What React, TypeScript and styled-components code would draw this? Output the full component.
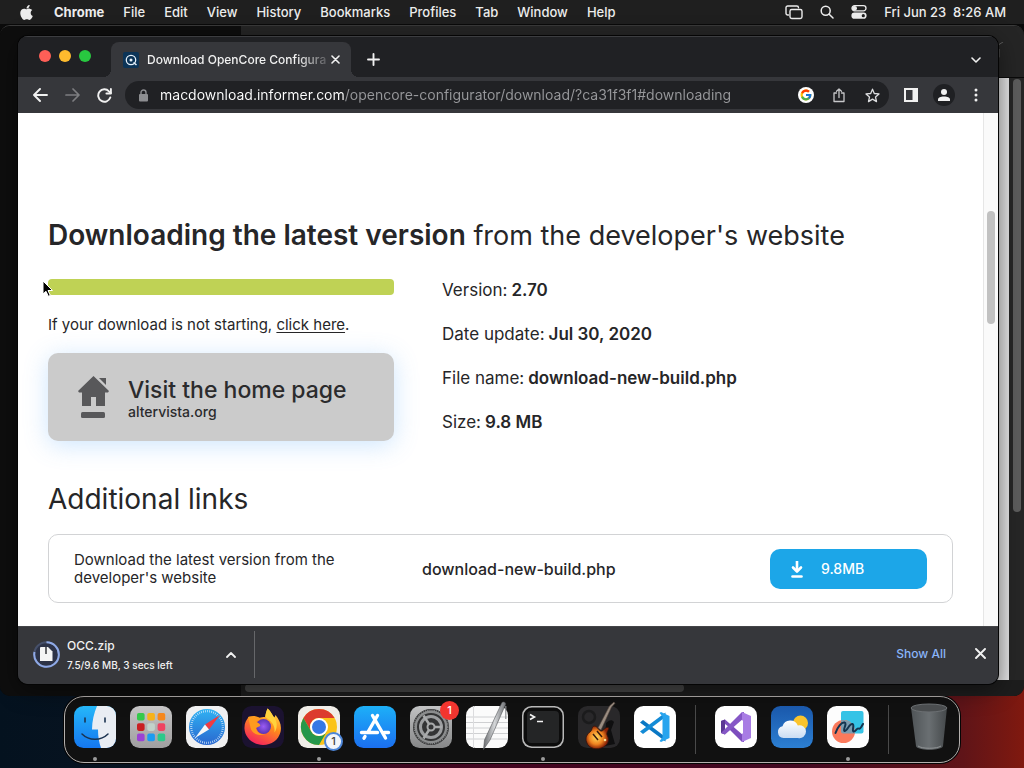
import React from 'react';
import styled, { createGlobalStyle } from 'styled-components';
import { FaApple } from 'react-icons/fa';
import { FcGoogle } from 'react-icons/fc';

const GlobalStyle = createGlobalStyle`
  *, *::before, *::after { box-sizing: border-box; }
  body {
    margin: 0;
    font-family: Inter, "Liberation Sans", sans-serif;
    -webkit-font-smoothing: antialiased;
  }
  button { font: inherit; color: inherit; background: none; border: 0; padding: 0; }
  h1, h2, p, ul, dl, dd { margin: 0; padding: 0; }
  svg { display: block; }
`;

const Desktop = styled.div`
  display: flex;
  flex-direction: column;
  min-height: 100vh;
  overflow: hidden;
  background:
    linear-gradient(180deg, #0a0a0a 60px, transparent 200px),
    linear-gradient(90deg, #04121f 0%, #0b1422 22%, #3a0a20 32%, #43041f 50%, #430820 78%, #5f1418 94%, #80190f 100%);
`;

/* ---------- menu bar ---------- */

const MenuBar = styled.header`
  display: flex;
  align-items: center;
  justify-content: space-between;
  height: 24px;
  padding: 0 18px;
  background: #1f1f1f;
  color: #ececec;
  font-size: 13px;
  font-weight: 500;
  white-space: nowrap;
`;

const MenuGroup = styled.nav<{ $gap: number }>`
  display: flex;
  align-items: center;
  gap: ${(p) => p.$gap}px;
`;

const MenuItem = styled.button<{ $strong?: boolean }>`
  font-weight: ${(p) => (p.$strong ? 700 : 500)};
`;

/* ---------- windows ---------- */

const Stage = styled.main`
  position: relative;
  flex: 1;
  display: flex;
  padding: 12px 26px 12px 18px;
`;

const BackWindow = styled.div`
  position: absolute;
  inset: 1px 0 0 0;
  display: grid;
  grid-template-columns: 241px 1fr;
  grid-template-rows: 52px 1fr 16px;
  overflow: hidden;
  background: #0e0e0e;
  border-radius: 10px;
  border-top: 1px solid #3a3a3a;
`;

const BackSidebar = styled.div`
  grid-row: 1 / 4;
  background: #0e0e0e;
`;

const BackTitle = styled.div`
  display: flex;
  justify-content: flex-end;
  padding: 16px 19px;
  background: #252525;
  border-bottom: 1px solid #0a0a0a;
  color: #5d5d5d;
`;

const BackBody = styled.div`
  display: flex;
  justify-content: flex-end;
  background: #262626;
`;

const BackPaper = styled.div`
  width: 40px;
  background: linear-gradient(90deg, #d0d0d0 70%, #e2e2e4 100%);
`;

const BackScroll = styled.div`
  width: 15px;
  padding: 1px 3px 0 4px;
`;

const BackThumb = styled.div`
  height: 72%;
  border-radius: 4px;
  background: #5c5c5c;
`;

const BackFooter = styled.div`
  padding: 4px 8px 4px 4px;
  background: #1d1d1d;
`;

const BackFooterThumb = styled.div`
  width: 57%;
  height: 8px;
  border-radius: 4px;
  background: #444;
`;

const Browser = styled.section`
  position: relative;
  flex: 1;
  min-width: 0;
  display: flex;
  flex-direction: column;
  border-radius: 10px;
  overflow: hidden;
  background: #36373b;
  box-shadow: 0 0 0 1px #050505, 0 6px 24px rgba(0, 0, 0, 0.45);
`;

const TabStrip = styled.div`
  display: flex;
  align-items: flex-end;
  height: 41px;
  padding: 0 14px 0 21px;
  background: #202124;
  border-top: 1px solid #3c3d40;
  color: #f1f1f1;
`;

const Lights = styled.div`
  display: flex;
  align-items: center;
  gap: 8px;
  width: 72px;
  height: 41px;
  padding-bottom: 2px;
`;

const Light = styled.button<{ $color: string }>`
  width: 12px;
  height: 12px;
  border-radius: 50%;
  background: ${(p) => p.$color};
`;

const Tab = styled.div`
  position: relative;
  display: flex;
  align-items: center;
  width: 240px;
  height: 35px;
  padding: 0 11px 0 12px;
  border-radius: 8px 8px 0 0;
  background: #36373b;
  &::before, &::after {
    content: '';
    position: absolute;
    bottom: 0;
    width: 8px;
    height: 8px;
  }
  &::before { left: -8px; background: radial-gradient(circle at 0 0, transparent 8px, #36373b 8px); }
  &::after { right: -8px; background: radial-gradient(circle at 100% 0, transparent 8px, #36373b 8px); }
`;

const TabTitle = styled.span`
  flex: 1;
  margin-left: 8px;
  white-space: nowrap;
  font-size: 12px;
  font-weight: 500;
  line-height: 18px;
  mask-image: linear-gradient(90deg, #000 82%, transparent 102%);
`;

const IconButton = styled.button<{ $size?: number; $dim?: boolean; $disc?: boolean }>`
  flex: none;
  display: grid;
  place-items: center;
  width: ${(p) => p.$size ?? 22}px;
  height: ${(p) => p.$size ?? 22}px;
  border-radius: 50%;
  background: ${(p) => (p.$disc ? '#1f2023' : 'none')};
  color: ${(p) => (p.$dim ? '#7d7e81' : '#f1f1f1')};
`;

const NewTab = styled.div`
  flex: 1;
  display: flex;
  align-items: center;
  justify-content: space-between;
  height: 35px;
  padding-left: 11px;
`;

const Toolbar = styled.div`
  display: flex;
  align-items: center;
  gap: 10px;
  height: 36px;
  padding: 0 11px 0 11px;
  background: #36373b;
`;

const Omnibox = styled.label`
  flex: 1;
  display: flex;
  align-items: center;
  gap: 11px;
  height: 28px;
  padding: 0 6px 0 13px;
  border-radius: 14px;
  background: #202124;
`;

const Url = styled.input`
  flex: 1;
  min-width: 0;
  height: 24px;
  padding: 0;
  border: 0;
  outline: 0;
  color: #f4f4f4;
  font: 400 14px/24px Inter, "Liberation Sans", sans-serif;
  background: linear-gradient(90deg, #fff 184px, #97989b 184px);
  background-clip: text;
  -webkit-background-clip: text;
  -webkit-text-fill-color: transparent;
`;

/* ---------- page ---------- */

const Viewport = styled.div`
  flex: 1;
  display: flex;
  background: #fff;
`;

const Page = styled.article`
  flex: 1;
  min-width: 0;
  padding: 103px 30px 23px;
  color: #262628;
`;

const ScrollTrack = styled.div`
  width: 15px;
  padding: 98px 3px 0;
  background: #fafafa;
  border-left: 1px solid #e6e6e6;
`;

const ScrollThumb = styled.div`
  width: 8px;
  height: 113px;
  border-radius: 4px;
  background: #c1c1c1;
`;

const Heading = styled.h1`
  font-size: 27px;
  font-weight: 400;
  line-height: 40px;
  white-space: nowrap;
  strong { font-size: 28px; font-weight: 600; line-height: 1; }
`;

const Columns = styled.div`
  display: grid;
  grid-template-columns: 346px 1fr;
  gap: 48px;
  margin-top: 23px;
`;

const Progress = styled.div`
  position: relative;
  height: 16px;
  border-radius: 4px;
  background: #bfd255;
`;

const Pointer = styled.svg`
  position: absolute;
  left: -6px;
  top: 1px;
`;

const Note = styled.p`
  margin: 19px 0 17px;
  font-size: 15px;
  line-height: 22px;
  white-space: nowrap;
  a { color: inherit; text-underline-offset: 2px; }
`;

const HomeButton = styled.a`
  display: flex;
  align-items: center;
  gap: 19px;
  height: 88px;
  padding: 0 30px;
  border-radius: 10px;
  background: #cbcbcb;
  color: #2b2b2d;
  text-decoration: none;
  box-shadow: 0 4px 24px rgba(90, 170, 250, 0.3);
`;

const HomeText = styled.span`
  padding-top: 3px;
`;

const HomeTitle = styled.strong`
  display: block;
  font-size: 23px;
  font-weight: 500;
  line-height: 26px;
  white-space: nowrap;
`;

const HomeHost = styled.span`
  display: block;
  font-size: 14px;
  font-weight: 500;
  line-height: 18px;
`;

const Facts = styled.dl`
  display: flex;
  flex-direction: column;
  gap: 22px;
`;

const Fact = styled.div`
  display: flex;
  gap: 4px;
  font-size: 17px;
  line-height: 22px;
  dd { font-weight: 600; }
`;

const SubHeading = styled.h2`
  margin: 38px 0 15px;
  font-size: 28px;
  font-weight: 400;
  line-height: 40px;
`;

const LinkCard = styled.div`
  display: grid;
  grid-template-columns: 1fr 1fr 157px;
  align-items: center;
  height: 69px;
  padding: 0 25px;
  border: 1px solid #d2d3d5;
  border-radius: 10px;
  p { max-width: 290px; font-size: 15px; line-height: 18px; }
  strong { font-size: 16px; font-weight: 500; }
`;

const DownloadButton = styled.button`
  display: flex;
  align-items: center;
  gap: 17px;
  height: 40px;
  padding: 0 20px;
  border-radius: 10px;
  background: #1ca6e8;
  color: #fff;
  font-size: 14px;
  font-weight: 500;
`;

/* ---------- download shelf ---------- */

const Shelf = styled.footer`
  display: flex;
  align-items: center;
  height: 58px;
  padding: 0 7px 2px 15px;
  background: #36373b;
  border-top: 1px solid #444548;
  color: #f1f1f1;
`;

const ShelfItem = styled.div`
  display: flex;
  align-items: center;
  gap: 7px;
  width: 222px;
  height: 47px;
  padding-right: 12px;
  border-right: 1px solid #66676a;
`;

const ShelfText = styled.div`
  flex: 1;
  white-space: nowrap;
  font-weight: 500;
`;

const FileName = styled.div`
  font-size: 12px;
  line-height: 20px;
`;

const FileState = styled.div`
  font-size: 10px;
  line-height: 18px;
`;

const ShelfActions = styled.div`
  display: flex;
  align-items: center;
  gap: 23px;
  margin-left: auto;
  padding-bottom: 2px;
`;

const ShowAll = styled.button`
  color: #8ab4f8;
  font-size: 12px;
  font-weight: 500;
`;

/* ---------- dock ---------- */

const DockArea = styled.footer`
  display: flex;
  justify-content: center;
  padding-bottom: 5px;
`;

const DockBar = styled.ul`
  display: flex;
  height: 67px;
  padding: 0 2px;
  border: 1px solid #b4b0ae;
  border-radius: 20px;
  background: #111;
  box-shadow: 0 0 0 1px #050505;
  list-style: none;
`;

const DockItem = styled.li<{ $running?: boolean }>`
  display: flex;
  flex-direction: column;
  align-items: center;
  gap: 9px;
  width: 56px;
  padding-top: 9px;
  &::after {
    content: '';
    width: 4px;
    height: 4px;
    border-radius: 50%;
    background: ${(p) => (p.$running ? '#9b9b9b' : 'transparent')};
  }
`;

const DockButton = styled.button`
  position: relative;
  width: 42px;
  height: 42px;
  svg { overflow: visible; }
`;

const DockRule = styled.li`
  width: 25px;
  padding: 8px 12px;
  &::after {
    content: '';
    display: block;
    width: 1px;
    height: 49px;
    background: #4a4a4a;
  }
`;

const Badge = styled.span<{ $kind: 'alert' | 'progress' }>`
  position: absolute;
  display: grid;
  place-items: center;
  width: 19px;
  height: 19px;
  border-radius: 50%;
  font-size: 11px;
  font-weight: 500;
  line-height: 1;
  ${(p) =>
    p.$kind === 'alert'
      ? 'right: -7px; top: -5px; background: #f2352f; color: #fff;'
      : 'right: -3px; bottom: -3px; background: #f4f6fa; color: #444; border: 2px solid #4d86d8;'}
`;

/* ---------- drawings ---------- */

const line = { fill: 'none', stroke: 'currentColor', strokeLinecap: 'round', strokeLinejoin: 'round' } as const;

const Tile = ({ fill }: { fill: string }) => <rect width="42" height="42" rx="9.5" fill={fill} />;

const App42 = ({ children }: { children: React.ReactNode }) => (
  <svg width="42" height="42" viewBox="0 0 42 42" aria-hidden="true">{children}</svg>
);

const Finder = () => (
  <App42>
    <defs>
      <linearGradient id="fi" x2="0" y2="1"><stop stopColor="#25b7f9" /><stop offset="1" stopColor="#1577f0" /></linearGradient>
      <clipPath id="fc"><rect width="42" height="42" rx="9.5" /></clipPath>
    </defs>
    <Tile fill="url(#fi)" />
    <path clipPath="url(#fc)" d="M23 0c-3 7-5 15-5 23.500h6c0 7 1 13 3 18.500h16V0z" fill="#e9edf3" />
    <path d="M11 12v4M31 12v4" stroke="#1b3350" strokeWidth="1.600" strokeLinecap="round" />
    <path d="M8 28c7 7 19 7 26 0" fill="none" stroke="#1b3350" strokeWidth="1.500" strokeLinecap="round" />
  </App42>
);

const Launchpad = () => {
  const colors = ['#35c94b', '#f6b21b', '#f5871d', '#c91f22', '#c2d2ca', '#ef4361', '#9b42d4', '#1c9bf1', '#2bc98a'];
  return (
    <App42>
      <defs><linearGradient id="lp" x2="0" y2="1"><stop stopColor="#c6c5c6" /><stop offset="1" stopColor="#9f9e9f" /></linearGradient></defs>
      <Tile fill="url(#lp)" />
      {colors.map((c, i) => (
        <rect key={c} x={7 + (i % 3) * 10.3} y={7 + Math.floor(i / 3) * 10.3} width="7.6" height="7.6" rx="1.8" fill={c} />
      ))}
    </App42>
  );
};

const Safari = () => (
  <App42>
    <defs><linearGradient id="sf" x2="0" y2="1"><stop stopColor="#2fb2f3" /><stop offset="1" stopColor="#2a67cf" /></linearGradient></defs>
    <Tile fill="#f0f0f1" />
    <circle cx="21" cy="21" r="18" fill="url(#sf)" />
    <circle cx="21" cy="21" r="15.800" fill="none" stroke="#d7eafb" strokeWidth="2.200" strokeDasharray="0.700 1.360" />
    <path d="M34 9 19 18.500 23 23.500z" fill="#ef3b42" />
    <path d="M9 32 19 18.500 23 23.500z" fill="#f7f7f7" />
  </App42>
);

const Firefox = () => (
  <App42>
    <defs>
      <linearGradient id="ff" x1="0.8" y1="0" x2="0.3" y2="1"><stop stopColor="#ffe14a" /><stop offset="0.45" stopColor="#ff8a1c" /><stop offset="1" stopColor="#f5205f" /></linearGradient>
      <radialGradient id="fp"><stop stopColor="#9b5cf5" /><stop offset="1" stopColor="#5a35b5" /></radialGradient>
    </defs>
    <Tile fill="#1b1230" />
    <path d="M25.500 2.500c4 3 4.500 7 7 9l1-2.500c4 5 6.500 10 5 17-2 8-9 13-17.500 13C11 39 3 31.500 2.500 23c-.3-5 1.500-9.500 5-12.500L8.500 13l3.500-2 5 1c2-1 4-1 6-1 .5-3 1.500-6 2.500-8.500z" fill="url(#ff)" />
    <circle cx="21.500" cy="20.500" r="7.500" fill="url(#fp)" />
    <path d="M6 11c5-2 9-1 12 1-1 2-2 2-4 4 3 1 5 3 4 4l-4 2c1 5 5 6.500 9.500 6.500-7 2-14-1-15-7z" fill="#ff9a1f" />
    <path d="M25.500 2.500c4 3 4.500 7 7 9 3 5 3 10 0 15 1-7-3-11-9-15.500 0-3 1-6 2-8.500z" fill="#ffd33d" />
  </App42>
);

const Chrome = () => (
  <App42>
    <Tile fill="#f0ede8" />
    <circle cx="21" cy="21" r="18" fill="#fbc318" />
    <path d="M5.400 12A18 18 0 0 1 36.600 12H21a9 9 0 0 0-7.800 13.500z" fill="#dc3b2e" />
    <path d="M5.400 12a18 18 0 0 0 15.600 27l7.800-13.500A9 9 0 0 1 13.200 25.500z" fill="#25974b" />
    <circle cx="21" cy="21" r="9" fill="#fff" />
    <circle cx="21" cy="21" r="7" fill="#3578e5" />
  </App42>
);

const AppStore = () => (
  <App42>
    <defs><linearGradient id="as" x2="0" y2="1"><stop stopColor="#1db0f8" /><stop offset="1" stopColor="#1b6ff0" /></linearGradient></defs>
    <Tile fill="url(#as)" />
    <g stroke="#fff" strokeWidth="3.400" strokeLinecap="round" fill="none">
      <path d="M18.500 9.500 31.500 32M23.500 9.500 14 26M11 30.500l-1 1.700M7.500 26.500h16M30 26.500h4.500" />
    </g>
  </App42>
);

const Settings = () => (
  <App42>
    <defs><linearGradient id="se" x2="0" y2="1"><stop stopColor="#c2c3c4" /><stop offset="1" stopColor="#868788" /></linearGradient></defs>
    <Tile fill="url(#se)" />
    <circle cx="21" cy="21" r="18" fill="#333435" />
    <circle cx="21" cy="21" r="15.200" fill="none" stroke="#8b8d8e" strokeWidth="2.400" />
    <circle cx="21" cy="21" r="16.800" fill="none" stroke="#8b8d8e" strokeWidth="1.200" strokeDasharray="1.100 1.100" />
    <circle cx="21" cy="21" r="10.500" fill="none" stroke="#9c9ea0" strokeWidth="3" />
    <circle cx="21" cy="21" r="3.500" fill="#333435" stroke="#a8aaab" strokeWidth="2" />
    <path d="M19 18 13.500 9.500M24.500 21H32M19 24l-5.500 8.500" stroke="#a8aaab" strokeWidth="2.500" />
  </App42>
);

const TextEdit = () => (
  <App42>
    <defs><linearGradient id="te" x2="1"><stop stopColor="#6b6d70" /><stop offset="0.5" stopColor="#d4d6d8" /><stop offset="1" stopColor="#707276" /></linearGradient></defs>
    <Tile fill="#fbfbfb" />
    <path d="M0 11h42M0 16.500h42M0 22h42M0 27.500h42M0 33h42" stroke="#cfd0d2" />
    <path d="M7.500 0v42" stroke="#dcdcde" />
    <path d="M36 -3.500c2-1 4 0 3.500 2L24 34l-6.500 9.500L18.500 34z" fill="url(#te)" stroke="#55575a" strokeWidth=".6" />
    <path d="M39.800 0v13" stroke="#8c8e92" strokeWidth="1.200" />
  </App42>
);

const Terminal = () => (
  <App42>
    <Tile fill="#b9b9b9" />
    <rect x="1.500" y="1.500" width="39" height="39" rx="8.500" fill="#0c0c0c" />
    <rect x="5" y="5" width="32" height="32" rx="4" fill="#242526" />
    <path d="M8 8.500 12.500 11 8 13.500M15 15.500h6" fill="none" stroke="#f4f4f4" strokeWidth="1.600" />
  </App42>
);

const GarageBand = () => (
  <App42>
    <defs><radialGradient id="gb" cx="0.45" cy="0.5"><stop stopColor="#ffd95c" /><stop offset="0.6" stopColor="#f08420" /><stop offset="1" stopColor="#8a2408" /></radialGradient></defs>
    <Tile fill="#29282a" />
    <circle cx="11" cy="11" r="6" fill="none" stroke="#1b1b1c" strokeWidth="2.500" />
    <path d="M28 17c3-3 6-4 8-1l-3 8 4 14-10 2z" fill="#0f0f10" />
    <path d="M20 22 31.500 0l4.500-4 .8 1.500L33.500 1 23 24z" fill="#9a8d82" stroke="#594a40" strokeWidth=".6" />
    <path d="M16 20c-3 1-1 4-4 6-3 2-5 6-3.500 10 2 7 11 8.500 17 5 5-3 6-7 4-11-1.500-3 0-4 1.500-8-3-2-5 2-7 3-3 1-4-5-8-5z" fill="url(#gb)" stroke="#35130a" strokeWidth=".8" />
    <path d="m15 28 5 6M19 25l5 6" stroke="#3a1a0c" strokeWidth="1.500" />
    <circle cx="27" cy="34" r="1.300" fill="#f7e09a" />
  </App42>
);

const VsCode = () => (
  <App42>
    <Tile fill="#fff" />
    <path d="M6 16.500 9 14l22.500 17v4.500z" fill="#0a78c4" />
    <path d="M6 25.500 9 28 31.500 11V6.500z" fill="#148bd6" />
    <path d="M27 6 35.500 10v22L27 36l-1.500-1 3-3.500V10.500L25.500 7z" fill="#27a4ee" />
  </App42>
);

const VisualStudio = () => (
  <App42>
    <Tile fill="#fff" />
    <path d="M6 15 10 13.500 29 30v6h-2z" fill="#7c4dbd" />
    <path d="M6 15v12l4 1.500V13.500z" fill="#5b3693" />
    <path d="m10 18 4 3-4 3z" fill="#fff" />
    <path d="M6 27 27 6h2v6L10 28.500z" fill="#8557c6" />
    <path d="M27 6 36 10v22l-9 4V27l1-1V16l-1-1z" fill="#a87ce4" />
    <path d="m20 21 8-7v14z" fill="#fff" />
  </App42>
);

const Weather = () => (
  <App42>
    <defs>
      <linearGradient id="we" x2="0" y2="1"><stop stopColor="#1a58ab" /><stop offset="1" stopColor="#2c7fd2" /></linearGradient>
      <linearGradient id="wc" x2="0" y2="1"><stop stopColor="#fff" /><stop offset="1" stopColor="#c9dcf3" /></linearGradient>
    </defs>
    <Tile fill="url(#we)" />
    <circle cx="29.500" cy="17" r="7.500" fill="#fbc42d" />
    <path d="M12.500 32a6 6 0 0 1-1-11.800 8.200 8.200 0 0 1 15.300-.8A6.500 6.500 0 1 1 27 32z" fill="url(#wc)" />
  </App42>
);

const Freeform = () => (
  <App42>
    <Tile fill="#fdfdfd" />
    <rect x="14" y="5" width="22.500" height="22.500" rx="2" fill="#35c3e6" />
    <circle cx="16.500" cy="25.500" r="11.500" fill="#fb7a5c" />
    <path d="M14 14.300a11.500 11.500 0 0 1 13.800 13.200H16a2 2 0 0 1-2-2z" fill="#7d9cb0" />
    <path d="M8.500 27c2-6 6-11 9-10.500 3 1-2 7.500 0 8.500 2.500.5 5-8 8-7 2.500 1-1 6.500 1 7.500 2 .5 3-3 4.500-3s1.500 2 5-4.500" fill="none" stroke="#14344f" strokeWidth="2" strokeLinecap="round" />
  </App42>
);

const Trash = () => (
  <App42>
    <defs><linearGradient id="tr" x2="1"><stop stopColor="#4f5457" /><stop offset="0.5" stopColor="#6a6f72" /><stop offset="1" stopColor="#44484a" /></linearGradient></defs>
    <path d="M3 1.500 8 40c1 5 26 5 27 0l4-38.500z" fill="url(#tr)" />
    <ellipse cx="21" cy="2" rx="18" ry="4" fill="#4a4d4f" stroke="#6b6f72" />
    <path d="M10 40c4 3 19 3 23 0" fill="none" stroke="#8f9395" />
  </App42>
);

type DockEntry = { name: string; icon: React.ReactNode; running?: boolean; badge?: 'alert' | 'progress' } | 'rule';

const dock: DockEntry[] = [
  { name: 'Finder', icon: <Finder />, running: true },
  { name: 'Launchpad', icon: <Launchpad /> },
  { name: 'Safari', icon: <Safari /> },
  { name: 'Firefox', icon: <Firefox /> },
  { name: 'Chrome', icon: <Chrome />, running: true, badge: 'progress' },
  { name: 'App Store', icon: <AppStore /> },
  { name: 'System Settings', icon: <Settings />, badge: 'alert' },
  { name: 'TextEdit', icon: <TextEdit /> },
  { name: 'Terminal', icon: <Terminal />, running: true },
  { name: 'GarageBand', icon: <GarageBand /> },
  { name: 'Visual Studio Code', icon: <VsCode /> },
  'rule',
  { name: 'Visual Studio', icon: <VisualStudio /> },
  { name: 'Weather', icon: <Weather /> },
  { name: 'Freeform', icon: <Freeform />, running: true },
  'rule',
  { name: 'Trash', icon: <Trash /> },
];

const menus = ['File', 'Edit', 'View', 'History', 'Bookmarks', 'Profiles', 'Tab', 'Window', 'Help'];

const facts: [string, string][] = [
  ['Version:', '2.70'],
  ['Date update:', 'Jul 30, 2020'],
  ['File name:', 'download-new-build.php'],
  ['Size:', '9.8 MB'],
];

export default function App() {
  return (
    <Desktop>
      <GlobalStyle />
      <MenuBar>
        <MenuGroup $gap={19}>
          <MenuItem aria-label="Apple menu"><FaApple size={17} /></MenuItem>
          <MenuItem $strong>Chrome</MenuItem>
          {menus.map((m) => <MenuItem key={m}>{m}</MenuItem>)}
        </MenuGroup>
        <MenuGroup $gap={17}>
          <MenuItem aria-label="Screen mirroring">
            <svg width="18" height="15" viewBox="0 0 18 15" {...line} strokeWidth="1.400">
              <path d="M3.500 10H2.700A1.700 1.700 0 0 1 1 8.300V2.700A1.700 1.700 0 0 1 2.700 1h9.100a1.700 1.700 0 0 1 1.700 1.700" />
              <rect x="5" y="4.500" width="12" height="9" rx="1.700" />
            </svg>
          </MenuItem>
          <MenuItem aria-label="Search">
            <svg width="14" height="14" viewBox="0 0 14 14" {...line} strokeWidth="1.500">
              <circle cx="5.700" cy="5.700" r="4.500" /><path d="m9.200 9.200 3.800 3.800" />
            </svg>
          </MenuItem>
          <MenuItem aria-label="Control Center">
            <svg width="16" height="14" viewBox="0 0 16 14">
              <rect x="1" y=".7" width="14" height="5.200" rx="2.600" {...line} strokeWidth="1.300" />
              <circle cx="3.600" cy="3.300" r="2.400" fill="currentColor" />
              <rect x=".4" y="7.600" width="15.200" height="6.200" rx="3.100" fill="currentColor" />
              <circle cx="12.300" cy="10.700" r="1.600" fill="#1f1f1f" />
            </svg>
          </MenuItem>
          <time>Fri Jun 23&nbsp; 8:26 AM</time>
        </MenuGroup>
      </MenuBar>

      <Stage>
        <BackWindow aria-hidden="true">
          <BackSidebar />
          <BackTitle>
            <svg width="12" height="16" viewBox="0 0 12 16" {...line}><path d="M0 7h6v8M2 5l8-5" /></svg>
          </BackTitle>
          <BackBody>
            <BackPaper />
            <BackScroll><BackThumb /></BackScroll>
          </BackBody>
          <BackFooter><BackFooterThumb /></BackFooter>
        </BackWindow>

        <Browser>
          <TabStrip>
            <Lights>
              <Light $color="#fe5f57" aria-label="Close window" />
              <Light $color="#febb2e" aria-label="Minimize window" />
              <Light $color="#28c840" aria-label="Zoom window" />
            </Lights>
            <Tab>
              <svg width="16" height="16" viewBox="0 0 16 16" aria-hidden="true">
                <rect width="16" height="16" rx="2" fill="#0c3457" />
                <circle cx="8" cy="8" r="4.700" fill="none" stroke="#e6f1fb" strokeWidth="1.300" />
                <circle cx="8" cy="8" r="1.500" fill="#e6f1fb" />
                <path d="m10.500 10.500 3 2.500" stroke="#e6f1fb" strokeWidth="1.500" />
              </svg>
              <TabTitle>Download OpenCore Configura</TabTitle>
              <IconButton $size={10} aria-label="Close tab">
                <svg width="9" height="9" viewBox="0 0 9 9" {...line} strokeWidth="1.600"><path d="m1 1 7 7M8 1 1 8" /></svg>
              </IconButton>
            </Tab>
            <NewTab>
              <IconButton aria-label="New tab">
                <svg width="13" height="13" viewBox="0 0 13 13" {...line} strokeWidth="1.900"><path d="M6.500 1v11M1 6.500h11" /></svg>
              </IconButton>
              <IconButton $size={16} aria-label="Search tabs">
                <svg width="10" height="6" viewBox="0 0 10 6" {...line} strokeWidth="1.600"><path d="m1 1 4 4 4-4" /></svg>
              </IconButton>
            </NewTab>
          </TabStrip>

          <Toolbar>
            <IconButton aria-label="Back">
              <svg width="15" height="14" viewBox="0 0 15 14" {...line} strokeWidth="1.900"><path d="M14 7H1.500M7 1 1 7l6 6" /></svg>
            </IconButton>
            <IconButton $dim aria-label="Forward">
              <svg width="15" height="14" viewBox="0 0 15 14" {...line} strokeWidth="1.700"><path d="M1 7h12.500M8 1l6 6-6 6" /></svg>
            </IconButton>
            <IconButton aria-label="Reload">
              <svg width="15" height="15" viewBox="0 0 15 15" {...line} strokeWidth="1.900"><path d="M13.300 9.500A6.200 6.200 0 1 1 12 3.300L13.700 5" /><path d="M13.900 1v4.500H9.400" /></svg>
            </IconButton>
            <Omnibox>
              <svg width="11" height="13" viewBox="0 0 11 13" aria-hidden="true">
                <rect x="1" y="5" width="9" height="7.500" rx="1" fill="#8d8e91" />
                <path d="M3 5V3.500a2.500 2.500 0 0 1 5 0V5" fill="none" stroke="#8d8e91" strokeWidth="1.400" />
              </svg>
              <Url aria-label="Address" defaultValue="macdownload.informer.com/opencore-configurator/download/?ca31f3f1#downloading" />
              <IconButton aria-label="Google">
                <svg width="16" height="16" viewBox="0 0 16 16">
                  <circle cx="8" cy="8" r="8" fill="#fff" />
                  <g transform="translate(1.500 1.500)"><FcGoogle size={13} /></g>
                </svg>
              </IconButton>
              <IconButton aria-label="Share">
                <svg width="12" height="15" viewBox="0 0 12 15" {...line} stroke="#c6c7c9" strokeWidth="1.300"><path d="M3.500 5H1v8.500h10V5H8.500M6 9.500V1M3.500 3.300 6 1l2.500 2.300" /></svg>
              </IconButton>
              <IconButton aria-label="Bookmark">
                <svg width="15" height="15" viewBox="0 0 15 15" {...line} stroke="#dcdddf" strokeWidth="1.300"><path d="m7.500 1.200 1.800 4.300 4.700.4-3.500 3.100 1 4.600-4-2.500-4 2.500 1-4.600L1 5.900l4.700-.4z" /></svg>
              </IconButton>
            </Omnibox>
            <IconButton $size={24} aria-label="Side panel">
              <svg width="14" height="14" viewBox="0 0 14 14"><path d="M0 0h14v14H0zM2 2v10h6.500V2z" fill="currentColor" fillRule="evenodd" /></svg>
            </IconButton>
            <IconButton $disc aria-label="Profile">
              <svg width="12" height="12" viewBox="0 0 12 12" fill="currentColor"><circle cx="6" cy="3" r="3" /><path d="M0 12V10.500C0 8.300 2.500 7.400 6 7.400s6 .9 6 3.100V12z" /></svg>
            </IconButton>
            <IconButton aria-label="More">
              <svg width="4" height="14" viewBox="0 0 4 14" fill="currentColor"><circle cx="2" cy="2" r="1.500" /><circle cx="2" cy="7" r="1.500" /><circle cx="2" cy="12" r="1.500" /></svg>
            </IconButton>
          </Toolbar>

          <Viewport>
            <Page>
              <Heading><strong>Downloading the latest version</strong> from the developer's website</Heading>
              <Columns>
                <div>
                  <Progress role="progressbar" aria-label="Download progress">
                    <Pointer width="12" height="18" viewBox="0 0 12 18" aria-hidden="true">
                      <path d="M1 1v13l3-2.700 2.300 5 2-.9-2.300-4.900h4.500z" fill="#000" stroke="#fff" strokeWidth="1" />
                    </Pointer>
                  </Progress>
                  <Note>If your download is not starting, <a href="#download">click here</a>.</Note>
                  <HomeButton href="#home">
                    <svg width="31" height="42" viewBox="0 0 31 42" fill="#58585a" aria-hidden="true">
                      <path d="M15.500 0 31 15l-1 1.500h-3V30h-9v-9h-5v9H4V16.500H1L0 15z" />
                      <path d="M21 2h7v7z" />
                      <rect x="3" y="36" width="24" height="6" rx="1.500" />
                    </svg>
                    <HomeText>
                      <HomeTitle>Visit the home page</HomeTitle>
                      <HomeHost>altervista.org</HomeHost>
                    </HomeText>
                  </HomeButton>
                </div>
                <Facts>
                  {facts.map(([label, value]) => (
                    <Fact key={label}><dt>{label}</dt><dd>{value}</dd></Fact>
                  ))}
                </Facts>
              </Columns>
              <SubHeading>Additional links</SubHeading>
              <LinkCard>
                <p>Download the latest version from the developer's website</p>
                <strong>download-new-build.php</strong>
                <DownloadButton>
                  <svg width="14" height="18" viewBox="0 0 14 18" {...line}>
                    <path d="M7 1v9" strokeWidth="2.600" strokeLinecap="butt" />
                    <path d="M3 7.500 7 11.500l4-4" strokeWidth="2.600" />
                    <path d="M2.500 16.500h9" strokeWidth="2.600" />
                  </svg>
                  9.8MB
                </DownloadButton>
              </LinkCard>
            </Page>
            <ScrollTrack><ScrollThumb /></ScrollTrack>
          </Viewport>

          <Shelf>
            <ShelfItem>
              <svg width="27" height="27" viewBox="0 0 27 27" aria-hidden="true">
                <circle cx="13.500" cy="13.500" r="12.300" fill="#2d3347" stroke="#46506a" strokeWidth="2" />
                <path d="M13.500 1.200A12.300 12.300 0 1 1 1.500 11" fill="none" stroke="#8fa9e6" strokeWidth="2" />
                <path d="M8 6h7l4.500 4.500V20H7V7a1 1 0 0 1 1-1z" fill="#f4f4f4" />
                <path d="M13 6v7" stroke="#36373b" strokeWidth="1.500" />
              </svg>
              <ShelfText>
                <FileName>OCC.zip</FileName>
                <FileState>7.5/9.6 MB, 3 secs left</FileState>
              </ShelfText>
              <IconButton aria-label="Download options">
                <svg width="10" height="6" viewBox="0 0 10 6" {...line} strokeWidth="1.800"><path d="m1 5 4-4 4 4" /></svg>
              </IconButton>
            </ShelfItem>
            <ShelfActions>
              <ShowAll>Show All</ShowAll>
              <IconButton aria-label="Close downloads bar">
                <svg width="11" height="11" viewBox="0 0 11 11" {...line} strokeWidth="1.900"><path d="m1 1 9 9M10 1l-9 9" /></svg>
              </IconButton>
            </ShelfActions>
          </Shelf>
        </Browser>
      </Stage>

      <DockArea>
        <DockBar>
          {dock.map((d, i) =>
            d === 'rule' ? (
              <DockRule key={i} aria-hidden="true" />
            ) : (
              <DockItem key={i} $running={d.running}>
                <DockButton aria-label={d.name}>
                  {d.icon}
                  {d.badge && <Badge $kind={d.badge}>1</Badge>}
                </DockButton>
              </DockItem>
            ),
          )}
        </DockBar>
      </DockArea>
    </Desktop>
  );
}
